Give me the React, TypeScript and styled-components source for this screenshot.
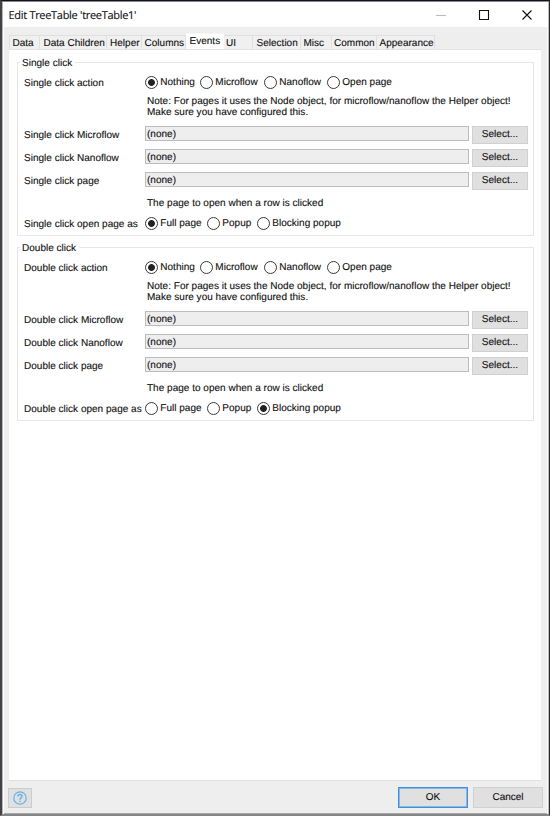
import React from "react";
import styled, { createGlobalStyle } from "styled-components";

const GlobalStyle = createGlobalStyle`
  *, *::before, *::after { box-sizing: border-box; }
  body { margin: 0; background: #55555a; }
  button {
    font: inherit;
    color: inherit;
    letter-spacing: inherit;
    text-rendering: inherit;
    padding: 0;
    margin: 0;
  }
`;

const Dialog = styled.div`
  display: flex;
  flex-direction: column;
  width: 550px;
  height: 816px;
  border-style: solid;
  border-width: 1px 1px 2px 2px;
  border-color: #15131a #29292d #858585 #424246;
  background: #eee;
  box-shadow: inset 0 1px 0 #87868a, inset 1px 0 0 #b5b5b7, inset 2px 0 0 #fdfdfd,
    inset -1px 0 0 #bbb, inset -2px 0 0 #fbfbfb, inset 0 -1px 0 #a8a8a8;
  color: #111;
  font: 10px/12px "Liberation Sans", Arial, sans-serif;
  letter-spacing: 0.015px;
  text-rendering: geometricPrecision;
  -webkit-text-stroke: 0.12px currentColor;
  white-space: nowrap;
  overflow: hidden;
`;

const TitleBar = styled.header`
  display: flex;
  align-items: center;
  flex: none;
  height: 25px;
  margin: 1px 1px 0;
  padding: 0 16px 0 5.5px;
  background: #fff;
`;

const Title = styled.h1`
  flex: 1;
  margin: 0;
  padding-top: 2px;
  font: 400 11px/16px "Open Sans", "Noto Sans", sans-serif;
  letter-spacing: -0.3px;
`;

const Controls = styled.div`
  display: flex;
  gap: 33px;
`;

const Glyph = styled.svg`
  width: 10px;
  height: 10px;
  fill: none;
  stroke: #111;
  stroke-width: 1.1;
  overflow: visible;
`;

const TabBar = styled.nav`
  display: flex;
  align-items: flex-end;
  flex: none;
  height: 22px;
  margin: 0 8px 0 7px;
  padding-left: 1px;
`;

const Tab = styled.div<{ $width: number; $active?: boolean; $inset?: number }>`
  flex: none;
  width: ${(p) => p.$width}px;
  height: ${(p) => (p.$active ? 16 : 14)}px;
  padding: 2px 0 0 ${(p) => p.$inset ?? 3}px;
  line-height: 11px;
  border-top: 1px solid ${(p) => (p.$active ? "#f6f6f6" : "#e0e0e0")};
  border-right: 1px solid ${(p) => (p.$active ? "#fff" : "#e0e0e0")};
  background: ${(p) => (p.$active ? "#fff" : "#f0f0f0")};

  &:first-child {
    box-shadow: -1px 0 0 #e0e0e0;
  }
`;

const Panel = styled.main`
  flex: 1;
  margin: 0 8px 0 7px;
  padding: 12px 7px 0 8px;
  background: #fff;
  border-top: 1px solid #e3e3e3;
  border-bottom: 1px solid #e0e0e0;
`;

const Group = styled.section`
  height: 174px;
  margin-bottom: 11px;
  border: 1px solid #e6e6e6;
`;

const Legend = styled.h2`
  width: max-content;
  height: 12px;
  margin: -6px 0 0 2px;
  padding: 1px 3px 0 2px;
  background: #fff;
  font: inherit;
`;

const Row = styled.div<{ $height: number; $top?: number }>`
  display: grid;
  grid-template-columns: 121px 1fr;
  align-items: start;
  height: ${(p) => p.$height}px;
  padding: ${(p) => p.$top ?? 0}px 5px 0 6px;
`;

const Label = styled.div<{ $top?: number }>`
  padding-top: ${(p) => p.$top ?? 3}px;
`;

const Note = styled.p`
  grid-column: 2;
  margin: 0;
  padding-left: 2px;
  line-height: 11.5px;
`;

const Radios = styled.div`
  display: flex;
  padding: 1px 0 0 0.3px;
`;

const Option = styled.label<{ $width: number }>`
  display: flex;
  align-items: flex-start;
  gap: 2px;
  width: ${(p) => p.$width}px;
  line-height: 14px;
`;

const Dot = styled.span<{ $on: boolean }>`
  flex: none;
  width: 13px;
  height: 13px;
  border: 1px solid #3a3a3a;
  border-radius: 50%;
  background: ${(p) => (p.$on ? "radial-gradient(circle, #222 3px, #fff 3.8px)" : "#fff")};
`;

const Picker = styled.div`
  display: grid;
  grid-template-columns: 324px 56px;
  column-gap: 3px;
  align-items: start;
`;

const Field = styled.div`
  height: 15px;
  padding: 2px 0 0 1px;
  border: 1px solid #bcbcbc;
  background: #eee;
`;

const Button = styled.button<{ $width?: number; $height?: number; $primary?: boolean }>`
  display: flex;
  align-items: center;
  justify-content: center;
  width: ${(p) => p.$width ?? 56}px;
  height: ${(p) => p.$height ?? 18}px;
  border: 1px solid #d0d0d0;
  background: #e0e0e0;
  ${(p) => p.$primary && "border-color: #3f8fdc; box-shadow: inset 0 0 0 1px #82b8ec;"}
`;

const Footer = styled.footer`
  display: flex;
  flex: none;
  align-items: flex-start;
  gap: 5px;
  height: 33px;
  padding: 6px 6px 0 6px;
`;

const Help = styled.button`
  display: grid;
  place-items: center;
  width: 24px;
  height: 20px;
  margin: 1px auto 0 0;
  border: 1px solid #cbcbcb;
  background: #e0e0e0;
`;

const tabs: { name: string; width: number; active?: boolean; inset?: number }[] = [
  { name: "Data", width: 30, inset: 2.5 },
  { name: "Data Children", width: 67, inset: 3.5 },
  { name: "Helper", width: 35 },
  { name: "Columns", width: 44, inset: 2.5 },
  { name: "Events", width: 38, active: true, inset: 3.5 },
  { name: "UI", width: 29, inset: 2 },
  { name: "Selection", width: 48, inset: 3.5 },
  { name: "Misc", width: 31, inset: 2.5 },
  { name: "Common", width: 45, inset: 2 },
  { name: "Appearance", width: 58, inset: 2.5 },
];

type RadioOption = { name: string; width: number };

const actions: RadioOption[] = [
  { name: "Nothing", width: 55 },
  { name: "Microflow", width: 64 },
  { name: "Nanoflow", width: 63 },
  { name: "Open page", width: 70 },
];

const modes: RadioOption[] = [
  { name: "Full page", width: 62 },
  { name: "Popup", width: 50 },
  { name: "Blocking popup", width: 90 },
];

function RadioSet({ options, value }: { options: RadioOption[]; value: string }) {
  return (
    <Radios>
      {options.map((o) => (
        <Option key={o.name} $width={o.width}>
          <Dot $on={o.name === value} />
          {o.name}
        </Option>
      ))}
    </Radios>
  );
}

function ClickGroup({ kind, mode }: { kind: string; mode: string }) {
  return (
    <Group>
      <Legend>{kind} click</Legend>
      <Row $height={26.5} $top={6}>
        <Label>{kind} click action</Label>
        <RadioSet options={actions} value="Nothing" />
      </Row>
      <Row $height={30}>
        <Note>
          Note: For pages it uses the Node object, for microflow/nanoflow the Helper object!
          <br />
          Make sure you have configured this.
        </Note>
      </Row>
      {["Microflow", "Nanoflow", "page"].map((target) => (
        <Row key={target} $height={23.4}>
          <Label $top={4}>
            {kind} click {target}
          </Label>
          <Picker>
            <Field>(none)</Field>
            <Button>Select...</Button>
          </Picker>
        </Row>
      ))}
      <Row $height={20.7} $top={2}>
        <Note>The page to open when a row is clicked</Note>
      </Row>
      <Row $height={15}>
        <Label>{kind} click open page as</Label>
        <RadioSet options={modes} value={mode} />
      </Row>
    </Group>
  );
}

export default function App() {
  return (
    <>
      <GlobalStyle />
      <Dialog>
        <TitleBar>
          <Title>Edit TreeTable 'treeTable1'</Title>
          <Controls>
            <Glyph viewBox="0 0 10 10">
              <path d="M0 5.5H10" stroke="#bbb" />
            </Glyph>
            <Glyph viewBox="0 0 10 10">
              <path d="M.5 .5H9.5V9.5H.5Z" />
            </Glyph>
            <Glyph viewBox="0 0 10 10">
              <path d="M.5 .5L9.5 9.5M9.5 .5L.5 9.5" />
            </Glyph>
          </Controls>
        </TitleBar>
        <TabBar>
          {tabs.map((t) => (
            <Tab key={t.name} $width={t.width} $active={t.active} $inset={t.inset}>
              {t.name}
            </Tab>
          ))}
        </TabBar>
        <Panel>
          <ClickGroup kind="Single" mode="Full page" />
          <ClickGroup kind="Double" mode="Blocking popup" />
        </Panel>
        <Footer>
          <Help aria-label="Help">
            <svg width="14" height="14" viewBox="0 0 14 14" fill="none" stroke="#63b3ec" strokeWidth="1.2">
              <circle cx="7" cy="7" r="6.2" />
              <path d="M5 5.5C5 2.8 9 2.9 9 5.3C9 6.9 7 6.8 7 8.7M7 9.7V11" strokeWidth="1.5" />
            </svg>
          </Help>
          <Button $width={70} $height={21} $primary>
            OK
          </Button>
          <Button $width={70} $height={21}>
            Cancel
          </Button>
        </Footer>
      </Dialog>
    </>
  );
}
